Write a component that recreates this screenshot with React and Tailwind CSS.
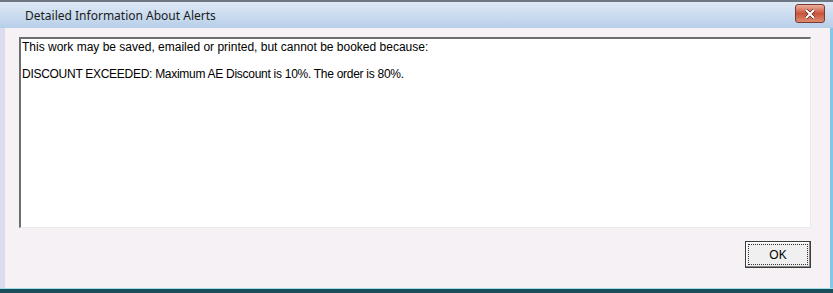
import React from 'react';

const App = () => {
  return (
    <div className="w-[833px] h-[293px] flex flex-col bg-[#f5f1f4] overflow-hidden" style={{ fontFamily: 'Arial' }}>
      {/* Title bar */}
      <div className="h-[28px] flex items-start justify-between border-t-2 border-[#6d7884] bg-gradient-to-b from-[#dfe9f5] to-[#b7cfe9] pl-[25px] pr-[8px]">
        <span className="text-[12px] text-[#1b1b1b] font-['Noto_Sans',sans-serif] pt-[5px]">Detailed Information About Alerts</span>
        <button className="w-[30px] h-[19px] mt-[2px] rounded-[3px] border border-[#7a3a2e] bg-gradient-to-b from-[#eab0a0] via-[#c9533b] to-[#dc8a72] flex items-center justify-center">
          <svg width="12" height="10" viewBox="0 0 12 10">
            <path d="M2 1 L10 9 M10 1 L2 9" stroke="#5a2a20" strokeWidth="3.4" />
            <path d="M2 1 L10 9 M10 1 L2 9" stroke="#ffffff" strokeWidth="2" />
          </svg>
        </button>
      </div>

      {/* Body */}
      <div className="flex-1 flex flex-col border-l-[5px] border-[#dcdcf0] border-r-[3px] border-r-[#86c6ec] pl-[14px] pr-[19px] pt-[9px]">
        <div className="h-[191px] bg-white border-t-2 border-l-2 border-[#6e6e6e] border-r border-b border-r-[#eaeaea] border-b-[#eaeaea] pl-[1px] pt-[1px] text-[12px] text-black leading-[15px]">
          <p>This work may be saved, emailed or printed, but cannot be booked because:</p>
          <p className="mt-[12px] tracking-[-0.28px]">DISCOUNT EXCEEDED: Maximum AE Discount is 10%. The order is 80%.</p>
        </div>
        <div className="flex justify-end mt-[13px]">
          <button className="w-[66px] h-[27px] border border-[#3c3c3c] bg-[#f0f0f0] p-[2px] shadow-[inset_-1px_-1px_0_#8a8a8a,inset_1px_1px_0_#ffffff]">
            <div className="w-full h-full border border-dotted border-[#333] flex items-center justify-center text-[12px] text-black">OK</div>
          </button>
        </div>
      </div>
      <div className="h-[1px] bg-[#9fdcec]" />
      <div className="h-[4px] bg-[#1c4e5a]" />
    </div>
  );
};

export default App;
